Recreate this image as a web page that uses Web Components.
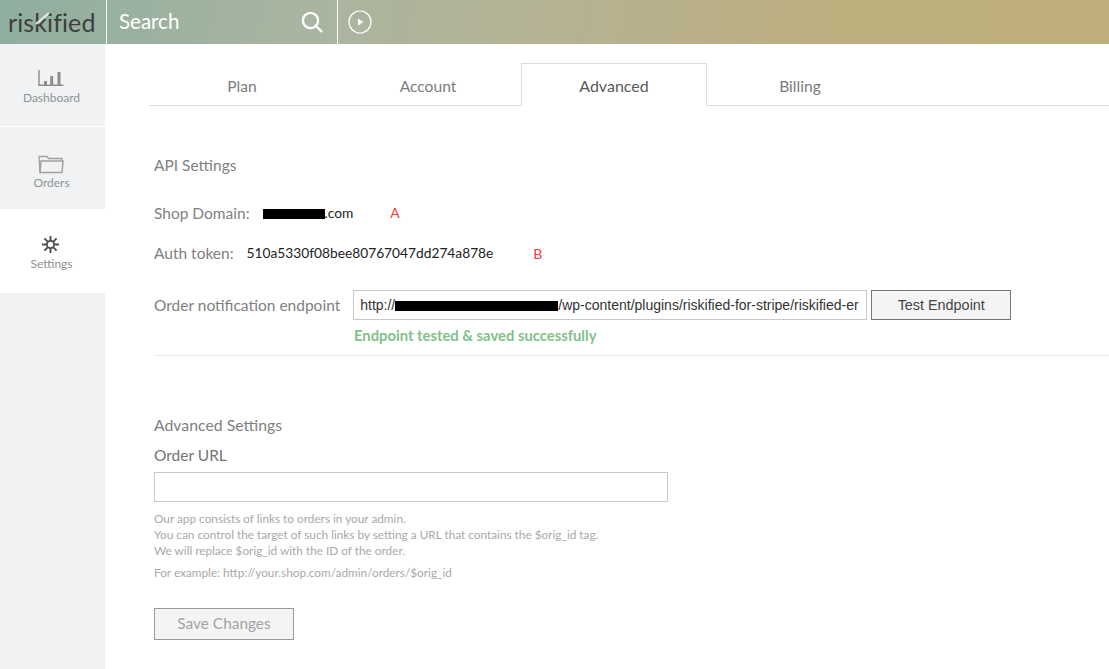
<!DOCTYPE html>
<html>
<head>
<meta charset="utf-8">
<title>Settings</title>
<style>
  html, body { margin: 0; height: 100%; background: #fff; overflow: hidden; }
  body { font-family: Lato, "Open Sans", sans-serif; }
</style>
</head>
<body>
<app-shell>
  <top-bar slot="top"></top-bar>
  <side-nav slot="side">
    <nav-item label="Dashboard" icon="dashboard" style="height:82px;padding-top:26px;--gap:4px"></nav-item>
    <nav-item label="Orders" icon="orders" style="height:83px;border-top:1px solid #fff;padding-top:28px;--gap:1px"></nav-item>
    <nav-item label="Settings" icon="settings" active style="height:84px;padding-top:27px;--gap:3px"></nav-item>
  </side-nav>
  <settings-page></settings-page>
</app-shell>

<script>
class AppShell extends HTMLElement {
  constructor() {
    super();
    this.attachShadow({ mode: "open" });
    this.shadowRoot.innerHTML = /*html*/ `
      <style>
        :host { display: grid; grid-template-columns: 105px 1fr; grid-template-rows: 44px 1fr; height: 669px; }
        .top { grid-column: 1 / 3; }
      </style>
      <div class="top"><slot name="top"></slot></div>
      <div><slot name="side"></slot></div>
      <div><slot></slot></div>
    `;
  }
}
customElements.define("app-shell", AppShell);

class TopBar extends HTMLElement {
  constructor() {
    super();
    this.attachShadow({ mode: "open" });
    this.shadowRoot.innerHTML = /*html*/ `
      <style>
        :host {
          display: flex; height: 44px;
          background: linear-gradient(100deg, #8fae9f 0%, #a9b5a0 28%, #b5b293 50%, #bdae7e 75%, #bdae7b 100%);
          color: #fff;
        }
        .logo { width: 107px; box-sizing: border-box; border-right: 1px solid #fff; padding-left: 8px; position: relative;
          font: 400 25px/44px "Lato", sans-serif; color: #3f3f3b; letter-spacing: .1px; }
        .logo svg { position: absolute; left: 34px; top: 11px; }
        .search { width: 231px; box-sizing: border-box; border-right: 1px solid #fff; display: flex; align-items: center;
          justify-content: space-between; padding: 0 14px 0 12px; font: 400 20.5px/40px "Lato", sans-serif; height: 44px; }
        .search span { margin-top: -3px; }
        .play { display: flex; align-items: center; padding-left: 10px; }
      </style>
      <div class="logo">riskified<svg width="20" height="24" viewBox="0 0 20 24"><path d="M2 13 L15 2" stroke="#e6ebe4" stroke-width="2" fill="none"/></svg></div>
      <div class="search"><span>Search</span>
        <svg width="22" height="22" viewBox="0 0 22 22" fill="none" stroke="#fff" stroke-width="2.4"><circle cx="9.5" cy="9.5" r="7.6"/><path d="M15 15 L21 21"/></svg>
      </div>
      <div class="play">
        <svg width="24" height="24" viewBox="0 0 24 24" fill="none" stroke="#fff" stroke-width="1.2"><circle cx="12" cy="12" r="11"/><path d="M10 8.5 L15.5 12 L10 15.5 Z" fill="#fff" stroke="none"/></svg>
      </div>
    `;
  }
}
customElements.define("top-bar", TopBar);

class SideNav extends HTMLElement {
  constructor() {
    super();
    this.attachShadow({ mode: "open" });
    this.shadowRoot.innerHTML = /*html*/ `
      <style>
        :host { display: flex; flex-direction: column; height: 625px; background: #f0f2f4; }
      </style>
      <slot></slot>
    `;
  }
}
customElements.define("side-nav", SideNav);

const NAV_ICONS = {
  dashboard: `<svg width="26" height="16" viewBox="0 0 26 16" fill="none" stroke="#8d8d8d"><path d="M1 0v15.3h24.5" stroke-width="1.4"/><path d="M7.5 15v-4M13.7 15v-9M21 15V2" stroke-width="3"/></svg>`,
  orders: `<svg width="26" height="19" viewBox="0 0 26 19" fill="none" stroke="#a0a0a0" stroke-width="1.3"><path d="M2 17.5 L1 1.5 H9 L10.5 3.5 H24 V6"/><path d="M3 6 H25 L24 17.5 H2 Z" stroke-width="1.5"/></svg>`,
  settings: `<svg width="17" height="17" viewBox="0 0 17 17" fill="none" stroke="#4f4f4f"><circle cx="8.5" cy="8.5" r="3.6" stroke-width="1.8"/><path d="M8.5 0v5M8.5 12v5M0 8.5h5M12 8.5h5M2.4 2.4l3.5 3.5M11.1 11.1l3.5 3.5M14.6 2.4l-3.5 3.5M5.9 11.1l-3.5 3.5" stroke-width="1.9"/></svg>`
};

class NavItem extends HTMLElement {
  constructor() {
    super();
    this.attachShadow({ mode: "open" });
  }
  connectedCallback() {
    this.render();
  }
  render() {
    this.shadowRoot.innerHTML = /*html*/ `
      <style>
        :host { display: flex; flex-direction: column; align-items: center; box-sizing: border-box; background: #f0f2f4; padding-right: 2px; }
        :host([active]) { background: #fff; }
        svg { display: block; margin: 0 2px var(--gap, 3px) 0; }
        span { font: 400 12px/16px Lato, sans-serif; color: #8f9296; }
      </style>
      ${NAV_ICONS[this.getAttribute("icon")]}
      <span>${this.getAttribute("label")}</span>
    `;
  }
}
customElements.define("nav-item", NavItem);

class TabBar extends HTMLElement {
  constructor() {
    super();
    this.attachShadow({ mode: "open" });
    this.shadowRoot.innerHTML = /*html*/ `
      <style>
        :host { display: flex; margin: 19px 0 0 44px; height: 42px; border-bottom: 1px solid #dcdcdc; }
        div { width: 186px; box-sizing: border-box; height: 42px; text-align: center; font: 400 15.6px/47px Lato, sans-serif; color: #7d7d7d; }
        .on { height: 43px; border: 1px solid #dcdcdc; border-bottom: 0; background: #fff; color: #5a5a5a; font-size: 16px; line-height: 44px; }
      </style>
      <div>Plan</div><div>Account</div><div class="on">Advanced</div><div>Billing</div>
    `;
  }
}
customElements.define("tab-bar", TabBar);

class SettingsPage extends HTMLElement {
  constructor() {
    super();
    this.attachShadow({ mode: "open" });
    this.shadowRoot.innerHTML = /*html*/ `
      <style>
        :host { display: block; font: 400 15.5px/20px Lato, sans-serif; color: #7f7f7f; }
        .body { padding-left: 49px; }
        .row { display: flex; align-items: center; }
        h3 { margin: 0; font: inherit; }
        .val { color: #222; font: 400 13.75px/20px Lato, sans-serif; }
        .mark { color: #f03c3c; font: 400 14px/20px Lato, sans-serif; }
        .bar { display: inline-block; background: #000; height: 10px; vertical-align: -1px; }
        .field { box-sizing: border-box; height: 30px; border: 1px solid #c8c8c8; background: #fff; }
        .endpoint { width: 514px; margin-left: 13px; padding-left: 6px; font: 400 14px/28px "Liberation Sans", sans-serif; color: #333; white-space: nowrap; }
        .btn { box-sizing: border-box; display: block; text-align: center; background: #f4f4f4; border: 1px solid #767676; font: 400 14.4px/28px "Liberation Sans", sans-serif; color: #444; }
        .test { width: 140px; height: 30px; margin-left: 4px; }
        .ok { margin: 5px 0 0 200px; color: #82c18a; font-weight: 700; font-size: 14.8px; line-height: 20px; }
        hr { border: 0; border-top: 1px solid #ececec; margin: 10px 0 0; }
        .help { margin: 0; font-size: 11.8px; line-height: 16px; color: #a9a9a9; }
        .save { width: 140px; height: 32px; margin-top: 27px; background: #f4f4f4; border: 1px solid #9a9a9a; color: #a3a3a3; font: 400 15.4px/29px Lato, sans-serif; }
      </style>
      <tab-bar></tab-bar>
      <div class="body">
        <h3 style="margin-top:49px">API Settings</h3>
        <div class="row" style="margin-top:28px">Shop Domain:<span class="val" style="margin-left:13px"><span class="bar" style="width:62px"></span>.com</span><span class="mark" style="margin-left:37px">A</span></div>
        <div class="row" style="margin-top:20px">Auth token:<span class="val" style="margin-left:13px">510a5330f08bee80767047dd274a878e</span><span class="mark" style="margin-left:40px;position:relative;top:1px">B</span></div>
        <div class="row" style="margin-top:27px">Order notification endpoint
          <div class="field endpoint">http://<span class="bar" style="width:163px"></span>/wp-content/plugins/riskified-for-stripe/riskified-er</div>
          <div class="btn test">Test Endpoint</div>
        </div>
        <div class="ok">Endpoint tested &amp; saved successfully</div>
        <hr>
        <h3 style="margin-top:59px;font-size:15.8px">Advanced Settings</h3>
        <div style="margin-top:10px;color:#747474">Order URL</div>
        <div class="field" style="width:514px;margin-top:7px"></div>
        <p class="help" style="margin-top:9px">Our app consists of links to orders in your admin.<br>You can control the target of such links by setting a URL that contains the $orig_id tag.<br>We will replace $orig_id with the ID of the order.</p>
        <p class="help" style="margin-top:6px">For example: http://your.shop.com/admin/orders/$orig_id</p>
        <div class="btn save">Save Changes</div>
      </div>
    `;
  }
}
customElements.define("settings-page", SettingsPage);
</script>
</body>
</html>
